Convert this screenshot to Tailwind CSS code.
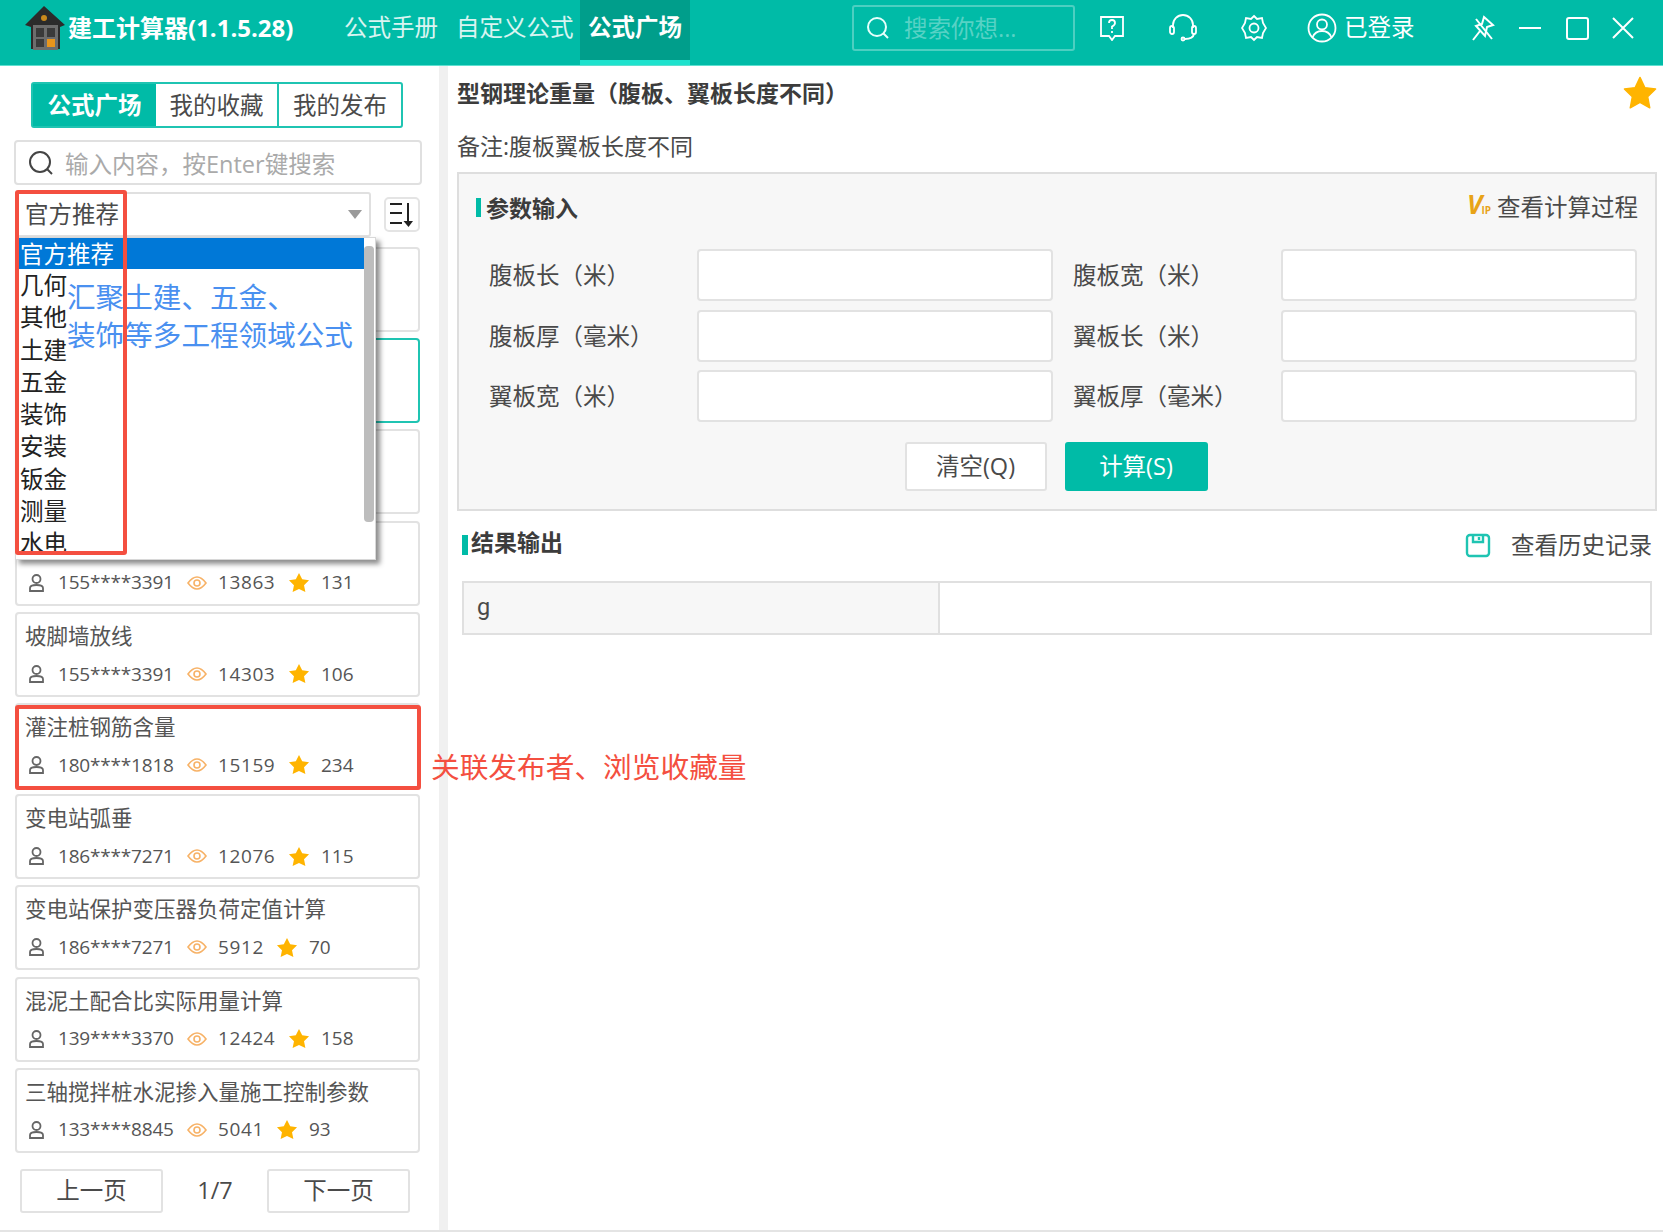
<!DOCTYPE html>
<html lang="zh">
<head>
<meta charset="utf-8">
<title>建工计算器</title>
<script src="https://cdn.jsdelivr.net/npm/@tailwindcss/browser@4"></script>
</head>
<body class="bg-white">
<div class="relative w-[1663px] h-[1232px] overflow-hidden bg-white text-[#4a4a4a] text-[23.500px] font-['Open_Sans','Noto_Sans_CJK_SC',sans-serif]">

  <!-- header -->
  <header class="flex items-center h-[66px] pb-[9px] bg-[#00bba7] border-b border-[#5fe0d0] text-white">
    <svg class="ml-[23px] w-[44px] h-[46px] shrink-0" viewBox="0 0 44 46">
      <path d="M21 1 L42 20 L37 22 L37 44 L8 44 L8 22 L2 20 Z" fill="#2b2b2b"/>
      <rect x="10" y="20" width="25" height="25" fill="#6d6d6d"/>
      <rect x="13" y="23" width="8" height="9" fill="#3a3a3a"/><rect x="24" y="23" width="8" height="9" fill="#3a3a3a"/>
      <rect x="13" y="34" width="8" height="8" fill="#3a3a3a"/><rect x="24" y="34" width="8" height="8" fill="#e8951c"/>
      <circle cx="21" cy="13" r="3" fill="#c98a1c"/>
    </svg>
    <div class="ml-[1px] w-[276px] font-bold text-[24px] whitespace-nowrap">建工计算器(1.1.5.28)</div>
    <nav class="flex items-center self-start h-[65px]">
      <a class="w-[112px] pb-[10px] text-white/85 whitespace-nowrap">公式手册</a>
      <a class="w-[124px] pb-[10px] text-white/85 whitespace-nowrap">自定义公式</a>
      <a class="flex justify-center items-center w-[110px] h-[65px] pb-[5px] bg-[#009e8b] border-b-[5px] border-[#1de2cd] font-bold whitespace-nowrap">公式广场</a>
    </nav>
    <div class="ml-[162px] flex items-center w-[223px] h-[46px] border-2 border-white/30 rounded-[3px]">
      <svg class="ml-[12px] w-[24px] h-[24px]" viewBox="0 0 24 24" fill="none" stroke="#e6fffb" stroke-width="2"><circle cx="11" cy="11" r="9"/><path d="M17.500 17.500 L22 22"/></svg>
      <span class="ml-[14px] mt-[2px] text-white/35 whitespace-nowrap">搜索你想...</span>
    </div>
    <svg class="ml-[24px] w-[26px] h-[26px]" viewBox="0 0 26 26" fill="none" stroke="#fff" stroke-width="1.800"><path d="M2 2 H24 V21 H16 L13 25 L10 21 H2 Z"/><path d="M10 8 Q10 5 13 5 Q16 5 16 8 Q16 10 13 11.500 V14 M13 16 V18"/></svg>
    <svg class="ml-[43px] w-[30px] h-[28px]" viewBox="0 0 30 28" fill="none" stroke="#fff" stroke-width="1.800"><path d="M5 14 V11 A10 10 0 0 1 25 11 V14"/><rect x="2" y="12" width="4" height="8" rx="2"/><rect x="24" y="12" width="4" height="8" rx="2"/><path d="M26 20 Q25 25 17 25"/><circle cx="15" cy="25" r="1.500"/></svg>
    <svg class="ml-[43px] w-[26px] h-[28px]" viewBox="0 0 26 28" fill="none" stroke="#fff" stroke-width="1.800"><path d="M13 2 L16 5 L21 4 L22 9 L25 14 L22 19 L21 24 L16 23 L13 26 L10 23 L5 24 L4 19 L1 14 L4 9 L5 4 L10 5 Z"/><circle cx="13" cy="14" r="4.500"/></svg>
    <svg class="ml-[40px] w-[30px] h-[30px]" viewBox="0 0 30 30" fill="none" stroke="#fff" stroke-width="1.800"><circle cx="15" cy="15" r="13.500"/><circle cx="15" cy="11.500" r="5"/><path d="M5.500 24.500 Q8 18 15 18 Q22 18 24.500 24.500"/></svg>
    <span class="ml-[7px] w-[70px] whitespace-nowrap">已登录</span>
    <svg class="ml-[57px] w-[24px] h-[26px]" viewBox="0 0 24 26" fill="none" stroke="#fff" stroke-width="2"><path d="M13 2 L22 10 L16 12 L14 21 L5 11 L11 9 Z"/><path d="M2 25 L9 16 M5 4 L21 24"/></svg>
    <svg class="ml-[24px] w-[22px] h-[4px]" viewBox="0 0 22 4"><rect y="1" width="22" height="2" fill="#fff"/></svg>
    <svg class="ml-[25px] w-[23px] h-[23px]" viewBox="0 0 23 23" fill="none" stroke="#fff" stroke-width="2"><rect x="1" y="1" width="21" height="21" rx="2"/></svg>
    <svg class="ml-[23px] w-[22px] h-[22px]" viewBox="0 0 22 22" fill="none" stroke="#fff" stroke-width="2"><path d="M1 1 L21 21 M21 1 L1 21"/></svg>
  </header>

  <div class="flex h-[1164px] border-b-2 border-[#e4e4e4] box-content">
    <!-- sidebar -->
    <aside class="relative w-[439px] shrink-0 pt-[16px]">
      <div class="flex ml-[31px] w-[372px] h-[46px] border-2 border-[#1fc4b2] rounded-[3px]">
        <div class="flex items-center justify-center w-[123px] pt-[2px] bg-[#00bba7] text-white font-bold">公式广场</div>
        <div class="flex items-center justify-center w-[123px] pt-[2px] border-r-2 border-[#1fc4b2]">我的收藏</div>
        <div class="flex items-center justify-center flex-1 pt-[2px]">我的发布</div>
      </div>
      <div class="flex items-center mt-[12px] ml-[14px] w-[408px] h-[45px] border-2 border-[#e0e0e0] rounded-[4px]">
        <svg class="ml-[12px] w-[26px] h-[26px]" viewBox="0 0 26 26" fill="none" stroke="#444" stroke-width="2"><circle cx="12" cy="12" r="10"/><path d="M19 19 L24 24"/></svg>
        <span class="ml-[11px] mt-[5px] text-[#aaaaaa] whitespace-nowrap">输入内容，按Enter键搜索</span>
      </div>
      <div class="relative flex items-center mt-[7px] ml-[15px] h-[45px]">
        <div class="flex items-center w-[356px] h-[45px] border-2 border-[#e0e0e0] rounded-[3px] pl-[8px]">
          <span class="flex-1">官方推荐</span>
          <span class="mr-[7px] w-0 h-0 border-x-[7px] border-x-transparent border-t-[9px] border-t-[#9a9a9a]"></span>
        </div>
        <div class="flex items-center justify-center ml-[13px] w-[36px] h-[35px] border-2 border-[#e4e4e4] rounded-[5px]">
          <svg class="w-[26px] h-[27px]" viewBox="0 0 26 27" fill="none" stroke="#222" stroke-width="2"><path d="M1 3 H13 M1 12 H13 M1 22 H13 M19 2 V22"/><path d="M14.500 20 H24 L19.500 26 Z" fill="#222" stroke="none"/></svg>
        </div>
        <!-- open dropdown -->
        <div class="absolute z-20 left-0 top-[45px] w-[361px] h-[323px] overflow-hidden bg-white border border-[#d8d8d8] shadow-[4px_4px_5px_rgba(0,0,0,0.45)] text-[#222]">
          <div class="absolute right-[1px] top-[8px] w-[10px] h-[276px] rounded-[4px] bg-[#bdbdbd]"></div>
          <ul class="w-[348px] leading-[32px]">
            <li class="h-[31px] pl-[4px] bg-[#0078d7] text-white">官方推荐</li>
            <li class="h-[32.300px] pl-[4px]">几何</li>
            <li class="h-[32.300px] pl-[4px]">其他</li>
            <li class="h-[32.300px] pl-[4px]">土建</li>
            <li class="h-[32.300px] pl-[4px]">五金</li>
            <li class="h-[32.300px] pl-[4px]">装饰</li>
            <li class="h-[32.300px] pl-[4px]">安装</li>
            <li class="h-[32.300px] pl-[4px]">钣金</li>
            <li class="h-[32.300px] pl-[4px]">测量</li>
            <li class="h-[32.300px] pl-[4px]">水电</li>
          </ul>
        </div>
      </div>

      <!-- formula list -->
      <div class="grid gap-[6.200px] mt-[10px] ml-[15px] w-[405px] text-[21.500px] text-[#555]">
        <div class="h-[85px] border-2 border-[#e2e2e2] rounded-[4px]"></div>
        <div class="h-[85px] border-2 border-[#1fc4b2] rounded-[4px]"></div>
        <div class="h-[85px] border-2 border-[#e2e2e2] rounded-[4px]"></div>

        <div class="flex flex-col justify-end pb-[9px] pl-[11px] h-[85px] border-2 border-[#e2e2e2] rounded-[4px]">
          <div class="flex items-center h-[24px] text-[19px]">
            <svg class="w-[17px] h-[18px] mr-[13px]" viewBox="0 0 17 18" fill="none" stroke="#666" stroke-width="1.800"><circle cx="8.500" cy="5" r="4"/><path d="M2 17 V14 Q2 11 8.500 11 Q15 11 15 14 V17 Z"/></svg>
            <span class="w-[114px] tracking-[-0.200px]">155****3391</span>
            <svg class="w-[20px] h-[16px] ml-[15px] mr-[11px]" viewBox="0 0 20 16" fill="none" stroke="#f7b267" stroke-width="1.600"><path d="M1 8 Q10 -4 19 8 Q10 20 1 8 Z"/><circle cx="10" cy="8" r="3"/></svg>
            <span class="w-[58px] tracking-[0.600px]">13863</span>
            <svg class="w-[22px] h-[21px] ml-[12px] mr-[11px]" viewBox="0 0 24 23"><path d="M12 1 L15.500 8 L23 9 L17.500 14.500 L19 22 L12 18.500 L5 22 L6.500 14.500 L1 9 L8.500 8 Z" fill="#ffb400"/></svg>
            <span>131</span>
          </div>
        </div>

        <div class="flex flex-col pt-[9px] pl-[8px] h-[85px] border-2 border-[#e2e2e2] rounded-[4px]">
          <div class="h-[26px] leading-[26px] whitespace-nowrap">坡脚墙放线</div>
          <div class="flex items-center h-[24px] mt-[13px] pl-[3px] text-[19px]">
            <svg class="w-[17px] h-[18px] mr-[13px]" viewBox="0 0 17 18" fill="none" stroke="#666" stroke-width="1.800"><circle cx="8.500" cy="5" r="4"/><path d="M2 17 V14 Q2 11 8.500 11 Q15 11 15 14 V17 Z"/></svg>
            <span class="w-[114px] tracking-[-0.200px]">155****3391</span>
            <svg class="w-[20px] h-[16px] ml-[15px] mr-[11px]" viewBox="0 0 20 16" fill="none" stroke="#f7b267" stroke-width="1.600"><path d="M1 8 Q10 -4 19 8 Q10 20 1 8 Z"/><circle cx="10" cy="8" r="3"/></svg>
            <span class="w-[58px] tracking-[0.600px]">14303</span>
            <svg class="w-[22px] h-[21px] ml-[12px] mr-[11px]" viewBox="0 0 24 23"><path d="M12 1 L15.500 8 L23 9 L17.500 14.500 L19 22 L12 18.500 L5 22 L6.500 14.500 L1 9 L8.500 8 Z" fill="#ffb400"/></svg>
            <span>106</span>
          </div>
        </div>

        <div class="flex flex-col pt-[9px] pl-[8px] h-[85px] border-2 border-[#e2e2e2] rounded-[4px]">
          <div class="h-[26px] leading-[26px] whitespace-nowrap">灌注桩钢筋含量</div>
          <div class="flex items-center h-[24px] mt-[13px] pl-[3px] text-[19px]">
            <svg class="w-[17px] h-[18px] mr-[13px]" viewBox="0 0 17 18" fill="none" stroke="#666" stroke-width="1.800"><circle cx="8.500" cy="5" r="4"/><path d="M2 17 V14 Q2 11 8.500 11 Q15 11 15 14 V17 Z"/></svg>
            <span class="w-[114px] tracking-[-0.200px]">180****1818</span>
            <svg class="w-[20px] h-[16px] ml-[15px] mr-[11px]" viewBox="0 0 20 16" fill="none" stroke="#f7b267" stroke-width="1.600"><path d="M1 8 Q10 -4 19 8 Q10 20 1 8 Z"/><circle cx="10" cy="8" r="3"/></svg>
            <span class="w-[58px] tracking-[0.600px]">15159</span>
            <svg class="w-[22px] h-[21px] ml-[12px] mr-[11px]" viewBox="0 0 24 23"><path d="M12 1 L15.500 8 L23 9 L17.500 14.500 L19 22 L12 18.500 L5 22 L6.500 14.500 L1 9 L8.500 8 Z" fill="#ffb400"/></svg>
            <span>234</span>
          </div>
        </div>

        <div class="flex flex-col pt-[9px] pl-[8px] h-[85px] border-2 border-[#e2e2e2] rounded-[4px]">
          <div class="h-[26px] leading-[26px] whitespace-nowrap">变电站弧垂</div>
          <div class="flex items-center h-[24px] mt-[13px] pl-[3px] text-[19px]">
            <svg class="w-[17px] h-[18px] mr-[13px]" viewBox="0 0 17 18" fill="none" stroke="#666" stroke-width="1.800"><circle cx="8.500" cy="5" r="4"/><path d="M2 17 V14 Q2 11 8.500 11 Q15 11 15 14 V17 Z"/></svg>
            <span class="w-[114px] tracking-[-0.200px]">186****7271</span>
            <svg class="w-[20px] h-[16px] ml-[15px] mr-[11px]" viewBox="0 0 20 16" fill="none" stroke="#f7b267" stroke-width="1.600"><path d="M1 8 Q10 -4 19 8 Q10 20 1 8 Z"/><circle cx="10" cy="8" r="3"/></svg>
            <span class="w-[58px] tracking-[0.600px]">12076</span>
            <svg class="w-[22px] h-[21px] ml-[12px] mr-[11px]" viewBox="0 0 24 23"><path d="M12 1 L15.500 8 L23 9 L17.500 14.500 L19 22 L12 18.500 L5 22 L6.500 14.500 L1 9 L8.500 8 Z" fill="#ffb400"/></svg>
            <span>115</span>
          </div>
        </div>

        <div class="flex flex-col pt-[9px] pl-[8px] h-[85px] border-2 border-[#e2e2e2] rounded-[4px]">
          <div class="h-[26px] leading-[26px] whitespace-nowrap">变电站保护变压器负荷定值计算</div>
          <div class="flex items-center h-[24px] mt-[13px] pl-[3px] text-[19px]">
            <svg class="w-[17px] h-[18px] mr-[13px]" viewBox="0 0 17 18" fill="none" stroke="#666" stroke-width="1.800"><circle cx="8.500" cy="5" r="4"/><path d="M2 17 V14 Q2 11 8.500 11 Q15 11 15 14 V17 Z"/></svg>
            <span class="w-[114px] tracking-[-0.200px]">186****7271</span>
            <svg class="w-[20px] h-[16px] ml-[15px] mr-[11px]" viewBox="0 0 20 16" fill="none" stroke="#f7b267" stroke-width="1.600"><path d="M1 8 Q10 -4 19 8 Q10 20 1 8 Z"/><circle cx="10" cy="8" r="3"/></svg>
            <span class="w-[46px] tracking-[0.600px]">5912</span>
            <svg class="w-[22px] h-[21px] ml-[12px] mr-[11px]" viewBox="0 0 24 23"><path d="M12 1 L15.500 8 L23 9 L17.500 14.500 L19 22 L12 18.500 L5 22 L6.500 14.500 L1 9 L8.500 8 Z" fill="#ffb400"/></svg>
            <span>70</span>
          </div>
        </div>

        <div class="flex flex-col pt-[9px] pl-[8px] h-[85px] border-2 border-[#e2e2e2] rounded-[4px]">
          <div class="h-[26px] leading-[26px] whitespace-nowrap">混泥土配合比实际用量计算</div>
          <div class="flex items-center h-[24px] mt-[13px] pl-[3px] text-[19px]">
            <svg class="w-[17px] h-[18px] mr-[13px]" viewBox="0 0 17 18" fill="none" stroke="#666" stroke-width="1.800"><circle cx="8.500" cy="5" r="4"/><path d="M2 17 V14 Q2 11 8.500 11 Q15 11 15 14 V17 Z"/></svg>
            <span class="w-[114px] tracking-[-0.200px]">139****3370</span>
            <svg class="w-[20px] h-[16px] ml-[15px] mr-[11px]" viewBox="0 0 20 16" fill="none" stroke="#f7b267" stroke-width="1.600"><path d="M1 8 Q10 -4 19 8 Q10 20 1 8 Z"/><circle cx="10" cy="8" r="3"/></svg>
            <span class="w-[58px] tracking-[0.600px]">12424</span>
            <svg class="w-[22px] h-[21px] ml-[12px] mr-[11px]" viewBox="0 0 24 23"><path d="M12 1 L15.500 8 L23 9 L17.500 14.500 L19 22 L12 18.500 L5 22 L6.500 14.500 L1 9 L8.500 8 Z" fill="#ffb400"/></svg>
            <span>158</span>
          </div>
        </div>

        <div class="flex flex-col pt-[9px] pl-[8px] h-[85px] border-2 border-[#e2e2e2] rounded-[4px]">
          <div class="h-[26px] leading-[26px] whitespace-nowrap">三轴搅拌桩水泥掺入量施工控制参数</div>
          <div class="flex items-center h-[24px] mt-[13px] pl-[3px] text-[19px]">
            <svg class="w-[17px] h-[18px] mr-[13px]" viewBox="0 0 17 18" fill="none" stroke="#666" stroke-width="1.800"><circle cx="8.500" cy="5" r="4"/><path d="M2 17 V14 Q2 11 8.500 11 Q15 11 15 14 V17 Z"/></svg>
            <span class="w-[114px] tracking-[-0.200px]">133****8845</span>
            <svg class="w-[20px] h-[16px] ml-[15px] mr-[11px]" viewBox="0 0 20 16" fill="none" stroke="#f7b267" stroke-width="1.600"><path d="M1 8 Q10 -4 19 8 Q10 20 1 8 Z"/><circle cx="10" cy="8" r="3"/></svg>
            <span class="w-[46px] tracking-[0.600px]">5041</span>
            <svg class="w-[22px] h-[21px] ml-[12px] mr-[11px]" viewBox="0 0 24 23"><path d="M12 1 L15.500 8 L23 9 L17.500 14.500 L19 22 L12 18.500 L5 22 L6.500 14.500 L1 9 L8.500 8 Z" fill="#ffb400"/></svg>
            <span>93</span>
          </div>
        </div>
      </div>

      <!-- pager -->
      <div class="flex items-center mt-[16px] ml-[20px]">
        <button class="w-[143px] h-[44px] border-2 border-[#e2e2e2] rounded-[3px]">上一页</button>
        <span class="w-[104px] text-center">1/7</span>
        <button class="w-[143px] h-[44px] border-2 border-[#e2e2e2] rounded-[3px]">下一页</button>
      </div>
    </aside>

    <div class="w-[9px] shrink-0 bg-[#f0f0f0]"></div>

    <!-- main -->
    <main class="flex-1 min-w-0 pl-[9px] pr-[6px] pt-[7px]">
      <div class="flex items-center justify-between h-[40px]">
        <h1 class="font-bold text-[23px] text-[#3c3c3c] whitespace-nowrap">型钢理论重量（腹板、翼板长度不同）</h1>
        <svg class="w-[34px] h-[34px]" viewBox="0 0 24 24"><path d="M12 1 L15.400 8.200 L23 9.200 L17.400 14.600 L18.900 22.500 L12 18.600 L5.100 22.500 L6.600 14.600 L1 9.200 L8.600 8.200 Z" fill="#ffb400" stroke="#ffb400" stroke-linejoin="round"/></svg>
      </div>
      <div class="mt-[13px] h-[40px] leading-[40px] text-[23px] whitespace-nowrap">备注:腹板翼板长度不同</div>

      <section class="mt-[6px] h-[339px] border-2 border-[#dedede] bg-[#f7f7f7] pt-[13px] pl-[17px] pr-[17px]">
        <div class="flex items-center justify-between h-[40px]">
          <div class="flex items-center">
            <span class="w-[5px] h-[19px] bg-[#00bba7]"></span>
            <span class="ml-[5px] mt-[2px] text-[23px] font-bold text-[#3c3c3c]">参数输入</span>
          </div>
          <div class="flex items-center">
            <span class="relative w-[24px] h-[26px] mr-[6px] italic font-bold leading-none text-[#e8a317]">
              <span class="absolute left-0 -top-[3px] text-[26px]">V</span>
              <span class="absolute right-0 bottom-[5px] text-[10px] not-italic">IP</span>
            </span>
            <span class="mt-[2px] whitespace-nowrap">查看计算过程</span>
          </div>
        </div>
        <div class="grid grid-cols-[188px_356px_188px_356px] gap-x-[20px] gap-y-[8.500px] mt-[22px] pl-[13px] items-center">
          <label class="mt-[2px]">腹板长（米）</label><div class="h-[52px] bg-white border-2 border-[#e2e2e2] rounded-[4px]"></div>
          <label class="mt-[2px]">腹板宽（米）</label><div class="h-[52px] bg-white border-2 border-[#e2e2e2] rounded-[4px]"></div>
          <label class="mt-[2px]">腹板厚（毫米）</label><div class="h-[52px] bg-white border-2 border-[#e2e2e2] rounded-[4px]"></div>
          <label class="mt-[2px]">翼板长（米）</label><div class="h-[52px] bg-white border-2 border-[#e2e2e2] rounded-[4px]"></div>
          <label class="mt-[2px]">翼板宽（米）</label><div class="h-[52px] bg-white border-2 border-[#e2e2e2] rounded-[4px]"></div>
          <label class="mt-[2px]">翼板厚（毫米）</label><div class="h-[52px] bg-white border-2 border-[#e2e2e2] rounded-[4px]"></div>
        </div>
        <div class="flex justify-center gap-[18px] mt-[20px] pr-[2px]">
          <button class="w-[142px] h-[49px] bg-white border-2 border-[#e2e2e2] rounded-[3px]">清空(Q)</button>
          <button class="w-[143px] h-[49px] bg-[#00bba7] text-white rounded-[3px]">计算(S)</button>
        </div>
      </section>

      <div class="flex items-center justify-between mt-[12px] h-[40px] pl-[5px] pr-[5px]">
        <div class="flex items-center">
          <span class="w-[6px] h-[20px] mt-[4px] bg-[#00bba7]"></span>
          <span class="ml-[3px] mb-[2px] text-[23px] font-bold text-[#3c3c3c]">结果输出</span>
        </div>
        <div class="flex items-center mt-[5px]">
          <svg class="w-[26px] h-[25px] mr-[20px]" viewBox="0 0 26 25" fill="none" stroke="#1fc4b2" stroke-width="2.400"><rect x="2" y="2" width="22" height="21" rx="3"/><path d="M8 2 V9 H18 V2 M14 4 V7"/></svg>
          <span class="whitespace-nowrap">查看历史记录</span>
        </div>
      </div>
      <div class="flex mt-[18px] ml-[5px] mr-[5px] h-[54px] border-2 border-[#e0e0e0]">
        <div class="flex items-center w-[476px] pl-[13px] bg-[#f7f7f7] border-r-2 border-[#e0e0e0] font-['Roboto',sans-serif]">g</div>
        <div class="flex-1"></div>
      </div>
    </main>
  </div>

  <!-- annotations over the screenshot -->
  <div class="absolute z-30 left-[67px] top-[278px] text-[28.600px] leading-[38px] text-[#4a90f0] whitespace-nowrap">汇聚土建、五金、<br>装饰等多工程领域公式</div>
  <div class="absolute z-30 left-[15px] top-[190px] w-[112px] h-[365px] border-4 border-[#f44f40] rounded-[3px]"></div>
  <div class="absolute z-30 left-[15px] top-[705px] w-[406px] h-[85px] border-4 border-[#f44f40] rounded-[3px]"></div>
  <div class="absolute z-30 left-[431px] top-[747px] text-[28.700px] leading-[40px] text-[#f44f40] whitespace-nowrap">关联发布者、浏览收藏量</div>
</div>
</body>
</html>
